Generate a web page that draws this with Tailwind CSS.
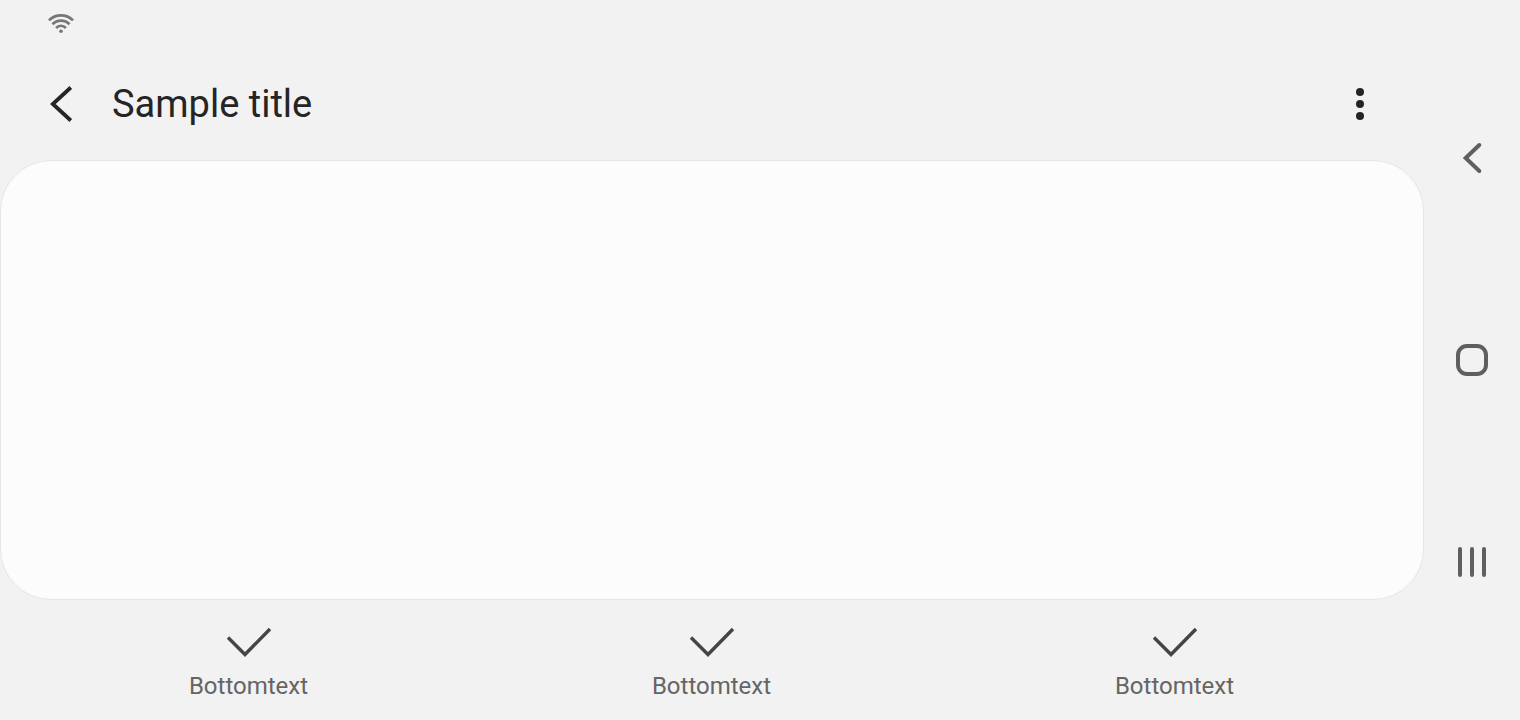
<!DOCTYPE html>
<html lang="en">
<head>
<meta charset="utf-8">
<title>Sample title</title>
<script src="https://cdn.jsdelivr.net/npm/@tailwindcss/browser@4"></script>
</head>
<body class="flex h-[720px] w-[1520px] overflow-hidden bg-[#f2f2f2] font-[Roboto,sans-serif]">
  <main class="flex w-[1424px] flex-col">
    <div class="flex h-12 items-start pl-12 pt-3">
      <svg class="h-6 w-[26px]" viewBox="0 0 26 24" fill="none" stroke="#777" stroke-width="2.7"><path d="M.9 8.4C7.5 1.6 18.5 1.6 25.1 8.4M4.5 12.3C9.2 7.4 16.8 7.4 21.5 12.3M8.1 16C10.8 13 15.2 13 17.9 16"/><circle cx="13" cy="19.2" r="1.8" fill="#777" stroke="none"/></svg>
    </div>
    <header class="flex h-28 items-center pr-[52px] pl-[50px]">
      <svg class="h-9 w-6" viewBox="0 0 24 36" fill="none" stroke="#252525" stroke-width="3.8"><path d="M20.8 1.5 2.8 18 20.8 34.5"/></svg>
      <h1 class="ml-[38px] text-[38px] leading-none text-[#252525]">Sample title</h1>
      <svg class="ml-auto h-9 w-6" viewBox="0 0 24 36" fill="#252525"><circle cx="12" cy="6" r="4"/><circle cx="12" cy="18" r="4"/><circle cx="12" cy="30" r="4"/></svg>
    </header>
    <section class="h-[440px] rounded-[51px] border border-[#e5e5e5] bg-[#fcfcfc]"></section>
    <footer class="flex h-[120px] justify-center pt-6 pr-px">
      <div class="flex w-[463px] flex-col items-center"><svg class="h-9 w-12" viewBox="0 0 48 36" fill="none" stroke="#454545" stroke-width="3.4"><path d="M3 13.5 20 30.5 45 5"/></svg><span class="mt-3 text-2xl leading-7 text-[#656565]">Bottomtext</span></div>
      <div class="flex w-[463px] flex-col items-center"><svg class="h-9 w-12" viewBox="0 0 48 36" fill="none" stroke="#454545" stroke-width="3.4"><path d="M3 13.5 20 30.5 45 5"/></svg><span class="mt-3 text-2xl leading-7 text-[#656565]">Bottomtext</span></div>
      <div class="flex w-[463px] flex-col items-center"><svg class="h-9 w-12" viewBox="0 0 48 36" fill="none" stroke="#454545" stroke-width="3.4"><path d="M3 13.5 20 30.5 45 5"/></svg><span class="mt-3 text-2xl leading-7 text-[#656565]">Bottomtext</span></div>
    </footer>
  </main>
  <nav class="flex w-24 flex-col items-center justify-between pt-[138px] pb-[138px]">
    <svg class="size-10" viewBox="0 0 40 40" fill="none" stroke="#5f5f5f" stroke-width="4" stroke-linecap="round"><path d="M27.3 7 13.7 20 27.3 33"/></svg>
    <svg class="size-10" viewBox="0 0 40 40" fill="none" stroke="#5f5f5f" stroke-width="4"><rect x="6" y="6" width="28" height="28" rx="9"/></svg>
    <svg class="size-10" viewBox="0 0 40 40" fill="none" stroke="#5f5f5f" stroke-width="4" stroke-linecap="round"><path d="M8 7v26M20 7v26M32 7v26"/></svg>
  </nav>
</body>
</html>
